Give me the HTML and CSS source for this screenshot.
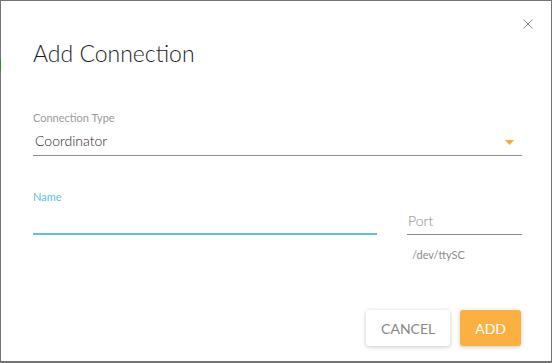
FILE: index.html
```html
<!DOCTYPE html>
<html lang="en">
<head>
    <meta charset="UTF-8">
    <meta name="viewport" content="width=device-width, initial-scale=1.0">
    <title>Add Connection</title>
    <link rel="stylesheet" href="styles.css">
</head>
<body>
    <div class="edge-mark"></div>
    <div class="dialog">
        <button class="close" aria-label="Close">
            <svg width="10" height="10" viewBox="0 0 10 10">
                <path d="M0.5 0.5 L9.5 9.5 M9.5 0.5 L0.5 9.5" stroke="#8a8a8a" stroke-width="1" fill="none"/>
            </svg>
        </button>
        <h1 class="title">Add Connection</h1>

        <div class="field select">
            <label class="label">Connection Type</label>
            <div class="select-value">
                <span>Coordinator</span>
                <svg class="arrow" width="9" height="5" viewBox="0 0 9 5">
                    <path d="M0 0 H9 L4.5 5 Z" fill="#f9a63c"/>
                </svg>
            </div>
        </div>

        <div class="row">
            <div class="field name">
                <label class="label active">Name</label>
                <div class="input active"></div>
            </div>
            <div class="port-col">
                <div class="input port">Port</div>
                <div class="helper">/dev/ttySC</div>
            </div>
        </div>

        <div class="actions">
            <button class="btn cancel">Cancel</button>
            <button class="btn add">Add</button>
        </div>
    </div>
</body>
</html>
```

FILE: styles.css
```css
body {
    margin: 0;
    padding: 1px 1px 2px 1px;
    background-color: #747474;
    font-family: Lato, "Open Sans", sans-serif;
    position: relative;
}
.edge-mark {
    position: absolute;
    left: 0;
    top: 60px;
    width: 1px;
    height: 11px;
    background-color: #2f8a2f;
}
.dialog {
    position: relative;
    width: 550px;
    height: 360px;
    box-sizing: border-box;
    background-color: #fff;
    padding: 38px 29px 0 32px;
}
.close {
    position: absolute;
    top: 18px;
    right: 18px;
    padding: 0;
    border: none;
    background: none;
    width: 10px;
    height: 10px;
    cursor: pointer;
}
.close svg {
    display: block;
}
.title {
    margin: 0;
    font-size: 23px;
    line-height: 28px;
    font-weight: 300;
    color: #1e1e1e;
}
.label {
    display: block;
    font-size: 11px;
    line-height: 13px;
    color: #9a9a9a;
}
.label.active {
    color: #5bc2e0;
}
.select {
    margin-top: 44px;
    border-bottom: 1px solid #8c8c8c;
}
.select-value {
    margin-top: 7px;
    padding: 0 8px 4px 2px;
    display: flex;
    justify-content: space-between;
    align-items: center;
    font-size: 14px;
    line-height: 20px;
    font-weight: 300;
    color: #1e1e1e;
}
.arrow {
    margin-top: 3px;
}
.row {
    margin-top: 34px;
    display: flex;
    align-items: flex-start;
    gap: 30px;
}
.name {
    flex: 1;
}
.input {
    height: 30px;
    border-bottom: 1px solid #8c8c8c;
}
.input.active {
    border-bottom: 2px solid #5bc2e0;
}
.port-col {
    width: 115px;
    padding-top: 21px;
}
.port {
    height: auto;
    padding: 0 0 3px 1px;
    font-size: 14px;
    line-height: 20px;
    font-weight: 300;
    color: #8a8a8a;
}
.helper {
    margin-top: 13px;
    padding-left: 5px;
    font-size: 11px;
    line-height: 13px;
    color: #8c8c8c;
}
.actions {
    margin-top: 49px;
    padding-right: 1px;
    display: flex;
    justify-content: flex-end;
    gap: 10px;
}
.btn {
    height: 36px;
    padding: 0 15px;
    border: none;
    border-radius: 3px;
    font-family: Lato, "Open Sans", sans-serif;
    font-size: 14px;
    text-transform: uppercase;
    box-shadow: 0 1px 4px rgba(0, 0, 0, 0.22);
    cursor: pointer;
}
.cancel {
    background-color: #fff;
    color: #888;
}
.add {
    background-color: #fcb042;
    color: #fff;
}
```
